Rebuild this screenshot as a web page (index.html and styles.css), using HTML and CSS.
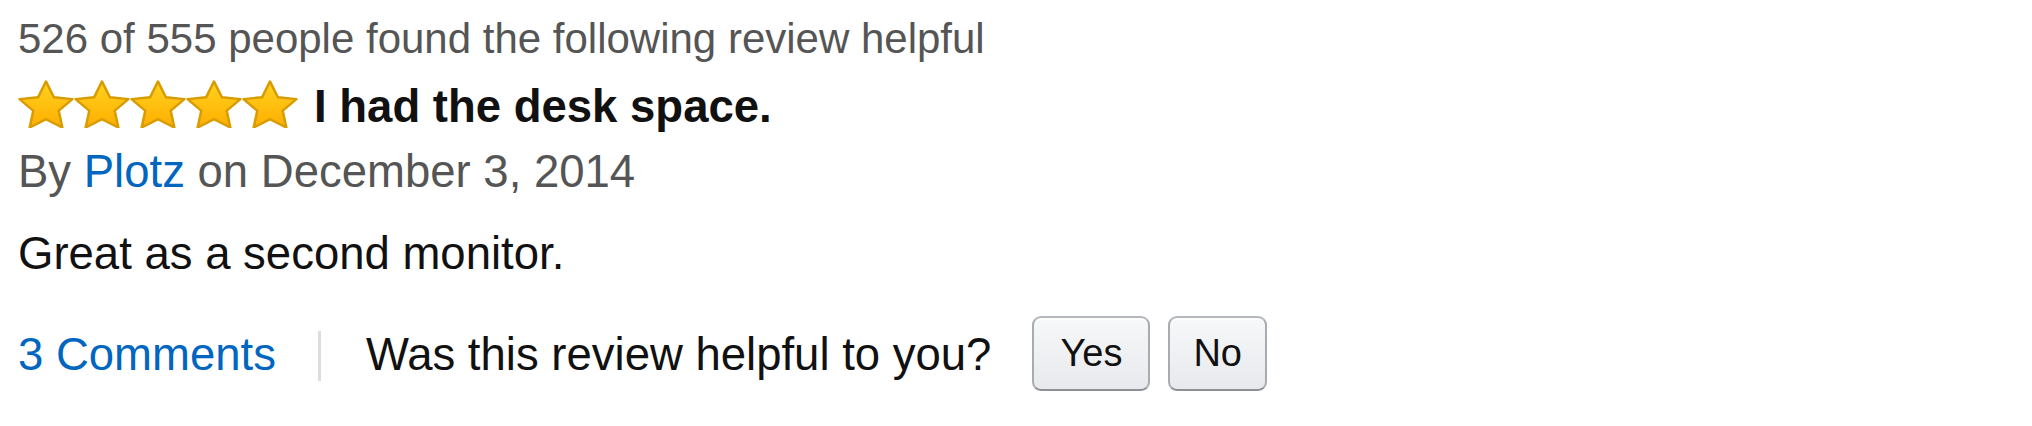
FILE: index.html
```html
<!DOCTYPE html>
<html>
<head>
<meta charset="utf-8">
<link rel="stylesheet" href="styles.css">
</head>
<body>
<div class="review">
  <div class="helpful-count">526 of 555 people found the following review helpful</div>
  <div class="title-row">
    <div class="stars">
      <svg class="star" viewBox="-28 -27.5 56 49" width="56" height="48"><defs><linearGradient id="g1" x1="0" y1="0" x2="0" y2="1"><stop offset="0" stop-color="#ffd21f"/><stop offset="1" stop-color="#ffae00"/></linearGradient></defs><polygon transform="scale(1.09,1)" points="0,-26 7.4,-9.9 24.73,-8.03 11.9,3.9 15.28,21.03 0,12.6 -15.28,21.03 -11.9,3.9 -24.73,-8.03 -7.4,-9.9" fill="url(#g1)" stroke="#d99c00" stroke-width="2.4" stroke-linejoin="round"/></svg>
      <svg class="star" viewBox="-28 -27.5 56 49" width="56" height="48"><polygon transform="scale(1.09,1)" points="0,-26 7.4,-9.9 24.73,-8.03 11.9,3.9 15.28,21.03 0,12.6 -15.28,21.03 -11.9,3.9 -24.73,-8.03 -7.4,-9.9" fill="url(#g1)" stroke="#d99c00" stroke-width="2.4" stroke-linejoin="round"/></svg>
      <svg class="star" viewBox="-28 -27.5 56 49" width="56" height="48"><polygon transform="scale(1.09,1)" points="0,-26 7.4,-9.9 24.73,-8.03 11.9,3.9 15.28,21.03 0,12.6 -15.28,21.03 -11.9,3.9 -24.73,-8.03 -7.4,-9.9" fill="url(#g1)" stroke="#d99c00" stroke-width="2.4" stroke-linejoin="round"/></svg>
      <svg class="star" viewBox="-28 -27.5 56 49" width="56" height="48"><polygon transform="scale(1.09,1)" points="0,-26 7.4,-9.9 24.73,-8.03 11.9,3.9 15.28,21.03 0,12.6 -15.28,21.03 -11.9,3.9 -24.73,-8.03 -7.4,-9.9" fill="url(#g1)" stroke="#d99c00" stroke-width="2.4" stroke-linejoin="round"/></svg>
      <svg class="star" viewBox="-28 -27.5 56 49" width="56" height="48"><polygon transform="scale(1.09,1)" points="0,-26 7.4,-9.9 24.73,-8.03 11.9,3.9 15.28,21.03 0,12.6 -15.28,21.03 -11.9,3.9 -24.73,-8.03 -7.4,-9.9" fill="url(#g1)" stroke="#d99c00" stroke-width="2.4" stroke-linejoin="round"/></svg>
    </div>
    <span class="title">I had the desk space.</span>
  </div>
  <div class="byline">By <a class="link" href="#">Plotz</a> on December 3, 2014</div>
  <div class="body-text">Great as a second monitor.</div>
  <div class="footer">
    <a class="link footer-text" href="#">3 Comments</a>
    <span class="sep"></span>
    <span class="footer-text question">Was this review helpful to you?</span>
    <button class="btn btn-yes">Yes</button>
    <button class="btn">No</button>
  </div>
</div>
</body>
</html>
```

FILE: styles.css
```css
html, body {
  margin: 0;
  padding: 0;
  background: #ffffff;
}

.review {
  font-family: "Liberation Sans", Arial, Helvetica, sans-serif;
  color: #111111;
  padding: 9px 0 0 18px;
}

.helpful-count {
  font-size: 42px;
  line-height: 60px;
  color: #555555;
}

.title-row {
  display: flex;
  align-items: center;
  height: 70px;
}

.stars {
  display: flex;
}

.star {
  display: block;
}

.title {
  font-size: 45.5px;
  font-weight: bold;
  line-height: 58px;
  padding-top: 6px;
  margin-left: 16px;
  color: #111111;
}

.byline {
  font-size: 45.5px;
  line-height: 66px;
  color: #555555;
}

.link {
  color: #0066c0;
  text-decoration: none;
}

.body-text {
  font-size: 45.5px;
  line-height: 66px;
  margin-top: 16px;
  color: #111111;
}

.footer {
  display: flex;
  align-items: center;
  height: 75px;
  margin-top: 29px;
}

.footer-text {
  font-size: 45.5px;
  line-height: 66px;
  padding-top: 3px;
}

.sep {
  width: 3px;
  height: 50px;
  background: #dddddd;
  margin: 4px 45px 0 42px;
}

.question {
  color: #111111;
  margin-right: 41px;
}

.btn {
  box-sizing: border-box;
  height: 75px;
  padding: 0 23px 3px 23px;
  margin-right: 18px;
  font-family: "Liberation Sans", Arial, Helvetica, sans-serif;
  font-size: 38px;
  line-height: 70px;
  color: #111111;
  border: 2px solid #adb1b8;
  border-color: #b4b7bc #a8abb0 #8d9096;
  border-radius: 9px;
  background: linear-gradient(to bottom, #f7f8fa, #e7e9ec);
  box-shadow: inset 0 2px 0 rgba(255, 255, 255, 0.6);
}

.btn-yes {
  padding-left: 26px;
  padding-right: 26px;
}
```
